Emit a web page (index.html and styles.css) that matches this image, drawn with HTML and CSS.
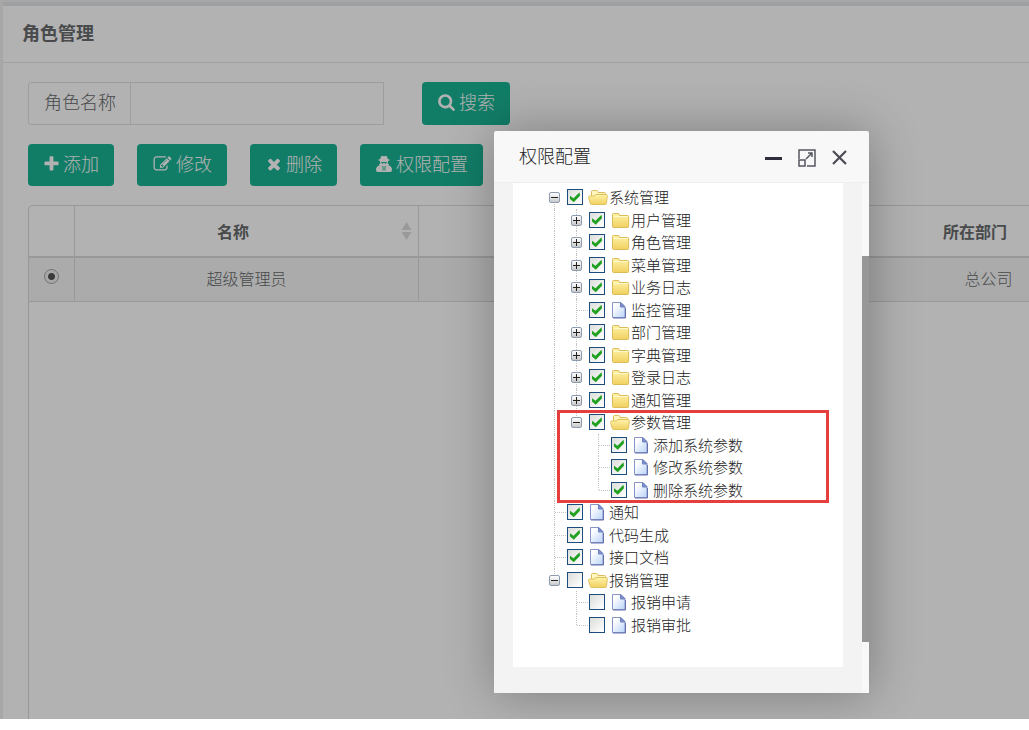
FILE: index.html
```html
<!DOCTYPE html>
<html lang="zh-CN">
<head>
<meta charset="utf-8">
<title>角色管理</title>
<link rel="stylesheet" href="styles.css">
</head>
<body>
<svg class="sprite" aria-hidden="true">
  <defs>
    <linearGradient id="gold" x1="0" y1="0" x2="0" y2="1"><stop offset="0" stop-color="#fff3a8"/><stop offset="1" stop-color="#f0d060"/></linearGradient>
    <linearGradient id="paper" x1="0" y1="0" x2="1" y2="1"><stop offset="0.2" stop-color="#ffffff"/><stop offset="1" stop-color="#b9d3f8"/></linearGradient>
  </defs>
  <symbol id="folder" viewBox="0 0 20 18">
    <path d="M2.500 15.500V3.500q0-1 1-1h4.500q1 0 1.300 1l.3 1h8q1 0 1 1v10q0 1-1 1h-14q-1 0-1.100-1z" fill="url(#gold)" stroke="#dcbc58"/>
    <path d="M3.500 5.500h14.500" stroke="#fff9cf"/>
  </symbol>
  <symbol id="folder-open" viewBox="0 0 20 18">
    <path d="M3.500 8V3.500q0-1 1-1h4q1 0 1.300 1l.2 1h6.500q1 0 1 1v9.500h-13z" fill="#fff6c0" stroke="#dcbc58"/>
    <path d="M3.500 16.500q-1 0-1.200-1L.6 9.500q-.2-1.500 1-1.500h5l1-1.500h10.500q1.200 0 1.200 1.200l-.8 7.800q-.2 1-1.200 1z" fill="url(#gold)" stroke="#e0c25c"/>
  </symbol>
  <symbol id="page" viewBox="0 0 20 18">
    <path d="M2.500 16.500V1.500h8.500l4 4v11z" fill="url(#paper)" stroke="#8794c8"/>
    <path d="M3 17h12.500V7" fill="none" stroke="#6471ad"/>
    <path d="M10.500 1.500v4.500h4.500z" fill="#7f93d2" stroke="#6f80bf"/>
  </symbol>
</svg>
<div class="screen">
  <main class="panel">
    <header class="panel-head"><h1>角色管理</h1></header>
    <div class="panel-body">
      <form class="search-row">
        <div class="field"><label for="role-name">角色名称</label><input id="role-name" type="text"></div>
        <button class="btn btn-search" type="button"><svg width="17" height="18" viewBox="64 0 1664 1792"><path d="M1216 832q0-185-131.500-316.500t-316.500-131.500-316.500 131.500-131.500 316.500 131.500 316.500 316.500 131.500 316.500-131.500 131.500-316.500zm512 832q0 52-38 90t-90 38q-54 0-90-38l-343-342q-179 124-399 124-143 0-273.500-55.500t-225-150-150-225-55.500-273.500 55.500-273.500 150-225 225-150 273.500-55.500 273.500 55.500 225 150 150 225 55.500 273.500q0 220-124 399l343 343q37 37 37 90z"/></svg>搜索</button>
      </form>
      <div class="toolbar">
        <button class="btn" type="button"><svg width="15" height="18" viewBox="192 0 1408 1792"><path d="M1600 736v192q0 40-28 68t-68 28h-416v416q0 40-28 68t-68 28h-192q-40 0-68-28t-28-68v-416h-416q-40 0-68-28t-28-68v-192q0-40 28-68t68-28h416v-416q0-40 28-68t68-28h192q40 0 68 28t28 68v416h416q40 0 68 28t28 68z"/></svg>添加</button>
        <button class="btn" type="button"><svg width="19" height="18" viewBox="0 0 1792 1792"><path d="M888 1184l116-116-152-152-116 116v56h96v96h56zm440-720q-16-16-33 1l-350 350q-17 17-1 33t33-1l350-350q17-17 1-33zm80 594v190q0 119-84.500 203.500t-203.500 84.500h-832q-119 0-203.500-84.500t-84.500-203.500v-832q0-119 84.500-203.500t203.500-84.500h832q63 0 117 25 15 7 18 23 3 17-9 29l-49 49q-14 14-32 8-23-6-45-6h-832q-66 0-113 47t-47 113v832q0 66 47 113t113 47h832q66 0 113-47t47-113v-126q0-13 9-22l64-64q15-15 35-7t20 29zm-96-738l288 288-672 672h-288v-288zm444 132l-92 92-288-288 92-92q28-28 68-28t68 28l152 152q28 28 28 68t-28 68z"/></svg>修改</button>
        <button class="btn" type="button"><svg width="16" height="18" viewBox="192 0 1408 1792"><path d="M1490 1322q0 40-28 68l-136 136q-28 28-68 28t-68-28l-294-294-294 294q-28 28-68 28t-68-28l-136-136q-28-28-28-68t28-68l294-294-294-294q-28-28-28-68t28-68l136-136q28-28 68-28t68 28l294 294 294-294q28-28 68-28t68 28l136 136q28 28 28 68t-28 68l-294 294 294 294q28 28 28 68z"/></svg>删除</button>
        <button class="btn" type="button"><svg width="16" height="18" viewBox="0 0 16 18"><path fill-rule="evenodd" d="M5 1.500Q6 .5 7 1q1 .5 2 0 1-.5 2 .5l.8 2.500q2 .4 2 1 0 .7-1.800 1v1.500q0 1-.4 1.500h1.400l-.5 1.300Q16 11.500 16 15q0 2-2 2H2q-2 0-2-2 0-3.500 3.500-4.700L3 9h1.400Q4 8.500 4 7.500V6Q2.200 5.700 2.200 5q0-.6 2-1zM5 7q0 1.400 1.400 1.400T8 7.400q.2 1 1.600 1T11 7zM5.800 11l1 1.500-.4 3h1l.2-3L7 11zM10.200 11l-1 1.500.4 3h-1l-.2-3L9 11z"/></svg>权限配置</button>
      </div>
      <div class="table-wrap">
        <table>
          <colgroup><col class="c-pick"><col class="c-name"><col class="c-key"><col class="c-dept"></colgroup>
          <thead><tr><th></th><th><div class="sortable"><span>名称</span><svg width="11" height="18" viewBox="0 0 11 18"><path d="M5.500 0l5 8h-10zM5.500 18l5-8h-10z"/></svg></div></th><th></th><th><div class="sortable"><span>所在部门</span><svg width="11" height="18" viewBox="0 0 11 18"><path d="M5.500 0l5 8h-10zM5.500 18l5-8h-10z"/></svg></div></th></tr></thead>
          <tbody><tr><td><input type="radio" name="role" aria-label="超级管理员" checked></td><td>超级管理员</td><td></td><td>总公司</td></tr></tbody>
        </table>
      </div>
    </div>
  </main>
  <div class="shade"></div>
  <section class="dialog" role="dialog" aria-labelledby="dialog-title">
    <header class="dialog-head">
      <h2 id="dialog-title">权限配置</h2>
      <button type="button" aria-label="最小化"><svg width="18" height="18"><path d="M0 9.500h17" stroke="#2e2d3c" stroke-width="3"/></svg></button>
      <button type="button" aria-label="最大化"><svg width="18" height="18" fill="none" stroke="#565660" stroke-width="1.500"><path d="M1 10V1h16v16H9M1 11h6v6H1zM8 10l6-6M10 4h4v4"/></svg></button>
      <button type="button" aria-label="关闭"><svg width="18" height="18"><path d="M2 2l13 13M15 2l-13 13" stroke="#4b4b53" stroke-width="2.200"/></svg></button>
    </header>
    <div class="dialog-body">
      <div class="sheet">
        <ul class="tree">
          <li><button class="sw open first" type="button" aria-label="折叠"></button><label><input type="checkbox" checked><svg><use href="#folder-open"/></svg>系统管理</label></li>
          <li><i class="line"></i><button class="sw" type="button" aria-label="展开"></button><label><input type="checkbox" checked><svg><use href="#folder"/></svg>用户管理</label></li>
          <li><i class="line"></i><button class="sw" type="button" aria-label="展开"></button><label><input type="checkbox" checked><svg><use href="#folder"/></svg>角色管理</label></li>
          <li><i class="line"></i><button class="sw" type="button" aria-label="展开"></button><label><input type="checkbox" checked><svg><use href="#folder"/></svg>菜单管理</label></li>
          <li><i class="line"></i><button class="sw" type="button" aria-label="展开"></button><label><input type="checkbox" checked><svg><use href="#folder"/></svg>业务日志</label></li>
          <li><i class="line"></i><i class="line tee"></i><label><input type="checkbox" checked><svg><use href="#page"/></svg>监控管理</label></li>
          <li><i class="line"></i><button class="sw" type="button" aria-label="展开"></button><label><input type="checkbox" checked><svg><use href="#folder"/></svg>部门管理</label></li>
          <li><i class="line"></i><button class="sw" type="button" aria-label="展开"></button><label><input type="checkbox" checked><svg><use href="#folder"/></svg>字典管理</label></li>
          <li><i class="line"></i><button class="sw" type="button" aria-label="展开"></button><label><input type="checkbox" checked><svg><use href="#folder"/></svg>登录日志</label></li>
          <li><i class="line"></i><button class="sw" type="button" aria-label="展开"></button><label><input type="checkbox" checked><svg><use href="#folder"/></svg>通知管理</label></li>
          <li><i class="line"></i><button class="sw open last" type="button" aria-label="折叠"></button><label><input type="checkbox" checked><svg><use href="#folder-open"/></svg>参数管理</label></li>
          <li><i class="line"></i><i></i><i class="line tee"></i><label><input type="checkbox" checked><svg><use href="#page"/></svg>添加系统参数</label></li>
          <li><i class="line"></i><i></i><i class="line tee"></i><label><input type="checkbox" checked><svg><use href="#page"/></svg>修改系统参数</label></li>
          <li><i class="line"></i><i></i><i class="line tee last"></i><label><input type="checkbox" checked><svg><use href="#page"/></svg>删除系统参数</label></li>
          <li><i class="line tee"></i><label><input type="checkbox" checked><svg><use href="#page"/></svg>通知</label></li>
          <li><i class="line tee"></i><label><input type="checkbox" checked><svg><use href="#page"/></svg>代码生成</label></li>
          <li><i class="line tee"></i><label><input type="checkbox" checked><svg><use href="#page"/></svg>接口文档</label></li>
          <li><button class="sw open last" type="button" aria-label="折叠"></button><label><input type="checkbox"><svg><use href="#folder-open"/></svg>报销管理</label></li>
          <li><i></i><i class="line tee"></i><label><input type="checkbox"><svg><use href="#page"/></svg>报销申请</label></li>
          <li><i></i><i class="line tee last"></i><label><input type="checkbox"><svg><use href="#page"/></svg>报销审批</label></li>
        </ul>
        <div class="mark"></div>
      </div>
      <div class="scroll"><div class="thumb"></div></div>
    </div>
  </section>
</div>
</body>
</html>
```
FILE: styles.css
```css
* { box-sizing: border-box; }
body {
  margin: 0;
  height: 100vh;
  overflow: hidden;
  background: #fff;
  color: #676a6c;
  font-family: "Open Sans", "Noto Sans CJK SC", sans-serif;
  font-size: 18px;
  font-weight: 300;
}
h1, h2, ul { margin: 0; padding: 0; }
button, input { font: inherit; }
.sprite { position: absolute; width: 0; height: 0; }

.screen {
  position: relative;
  height: calc(100vh - 11px);
  padding: 2px 0 0 3px;
  background: #efefef;
  overflow: hidden;
}
.shade { position: absolute; inset: 0; background: rgba(0, 0, 0, 0.3); }
.panel {
  display: flex;
  flex-direction: column;
  height: 100%;
  border-top: 4px solid #e4e5e7;
  background: #fff;
}
.panel-head {
  height: 57px;
  padding: 0 19px;
  border-bottom: 1px solid #e4e6e8;
}
.panel-head h1 { font-size: 18px; line-height: 54px; }
.panel-body {
  flex: 1;
  display: flex;
  flex-direction: column;
  gap: 19px;
  padding: 19px 0 0 25px;
}
.search-row { display: flex; gap: 38px; }
.field {
  display: flex;
  width: 356px;
  height: 43px;
  border: 1px solid #e0e1e3;
  border-radius: 3px 0 0 3px;
}
.field label {
  padding: 0 14px 0 15px;
  border-right: 1px solid #e0e1e3;
  line-height: 39px;
  white-space: nowrap;
}
.field input { flex: 1; min-width: 0; border: 0; background: none; outline: 0; }
.btn {
  display: flex;
  align-items: center;
  gap: 4px;
  height: 42px;
  padding: 0 15px 3px;
  border: 0;
  border-radius: 4px;
  background: #1ab394;
  color: #fff;
  line-height: 38px;
  white-space: nowrap;
}
.btn { padding-left: 16px; }
.btn-search { height: 43px; }
.btn svg { fill: currentColor; }
.toolbar { display: flex; gap: 23px; }

.table-wrap {
  flex: 1;
  border: 1px solid #d9dadb;
  border-width: 1px 0 0 1px;
  border-radius: 5px 0 0 0;
  overflow: hidden;
}
table {
  width: 1132px;
  table-layout: fixed;
  border-collapse: separate;
  border-spacing: 0;
  font-size: 16px;
  text-align: center;
}
.c-pick { width: 46px; }
.c-name, .c-dept { width: 344px; }
th, td { padding: 0; border-right: 1px solid #d9dadb; }
th { height: 52px; border-bottom: 2px solid #d9dadb; }
td { height: 44px; padding-bottom: 3px; border-bottom: 1px solid #d9dadb; background: #f5f5f5; }
.sortable { display: flex; align-items: center; padding-right: 6px; }
.sortable span { flex: 1; padding: 0 10px 1px 0; }
.sortable svg { fill: #dcdcdc; }
input[type="radio"] {
  appearance: none;
  display: block;
  width: 15px;
  height: 15px;
  margin: 0 auto 4px;
  border: 1px solid #a5a5a5;
  border-radius: 50%;
  background: radial-gradient(circle, #555 0 3px, #f0f0f0 4px);
}

.dialog {
  position: absolute;
  top: 131px;
  right: 160px;
  width: 375px;
  border-radius: 2px;
  background: #f8f8f8;
  box-shadow: 1px 1px 50px rgba(0, 0, 0, 0.3);
  color: #222;
}
.dialog-head {
  display: flex;
  align-items: center;
  gap: 15px;
  height: 52px;
  padding: 0 20px 0 25px;
  border-bottom: 1px solid #eee;
}
.dialog-head h2 { flex: 1; font-size: 18px; font-weight: inherit; line-height: 51px; }
.dialog-head button { display: block; padding: 3px 0 0; border: 0; background: none; }
.dialog-head svg { display: block; }
.dialog-body { display: flex; }
.sheet {
  position: relative;
  flex: 1;
  padding: 3px 0 31px 31px;
  border: solid #f3f3f3;
  border-width: 0 19px 26px;
  background: #fff;
}
.scroll { width: 7px; padding: 73px 0 51px; background: #f8f8f8; display: flex; }
.thumb { flex: 1; background: #979797; }

.tree {
  display: grid;
  grid-auto-rows: 1fr;
  height: 450px;
  list-style: none;
  font-size: 15px;
  line-height: 22px;
}
.tree li { display: flex; min-height: 0; white-space: nowrap; }
.tree i, .sw { position: relative; flex: none; width: 22px; }
.line::before, .sw::before {
  content: "";
  position: absolute;
  left: 10px;
  top: 0;
  bottom: 0;
  border-left: 1px dotted #c4c4c4;
}
.line.last::before, .sw.last::before { bottom: 50%; }
.sw.first::before { top: 50%; }
.tee::after {
  content: "";
  position: absolute;
  left: 11px;
  right: 0;
  top: 11px;
  border-top: 1px dotted #c4c4c4;
}
.sw { padding: 0; border: 0; background: none; }
.sw::after {
  content: "";
  position: absolute;
  left: 5px;
  top: 6px;
  width: 11px;
  height: 11px;
  border: 1px solid #8c9cae;
  border-radius: 2px;
  background:
    linear-gradient(#222, #222) center / 7px 1px no-repeat,
    linear-gradient(#222, #222) center / 1px 7px no-repeat,
    linear-gradient(#fff, #c9c9c9);
  box-sizing: border-box;
}
.sw.open::after {
  background:
    linear-gradient(#222, #222) center / 7px 1px no-repeat,
    linear-gradient(#fff, #c9c9c9);
}
.tree label { display: flex; align-items: center; }
.tree label svg { width: 20px; height: 18px; margin: 0 1px 0 5px; }
.tree input {
  appearance: none;
  display: grid;
  place-items: center;
  width: 16px;
  height: 16px;
  margin: 0 0 0 1px;
  border: 1px solid #1d4d7c;
  background: linear-gradient(135deg, #dcdedb, #fff);
}
.tree input:checked::before {
  content: "";
  width: 10px;
  height: 10px;
  background: #21a121;
  clip-path: polygon(0 35%, 35% 60%, 95% 0, 100% 35%, 38% 100%, 0 68%);
}
.mark {
  position: absolute;
  top: 227px;
  right: 14px;
  left: 44px;
  height: 93px;
  border: 3px solid #e53e3e;
}
```
